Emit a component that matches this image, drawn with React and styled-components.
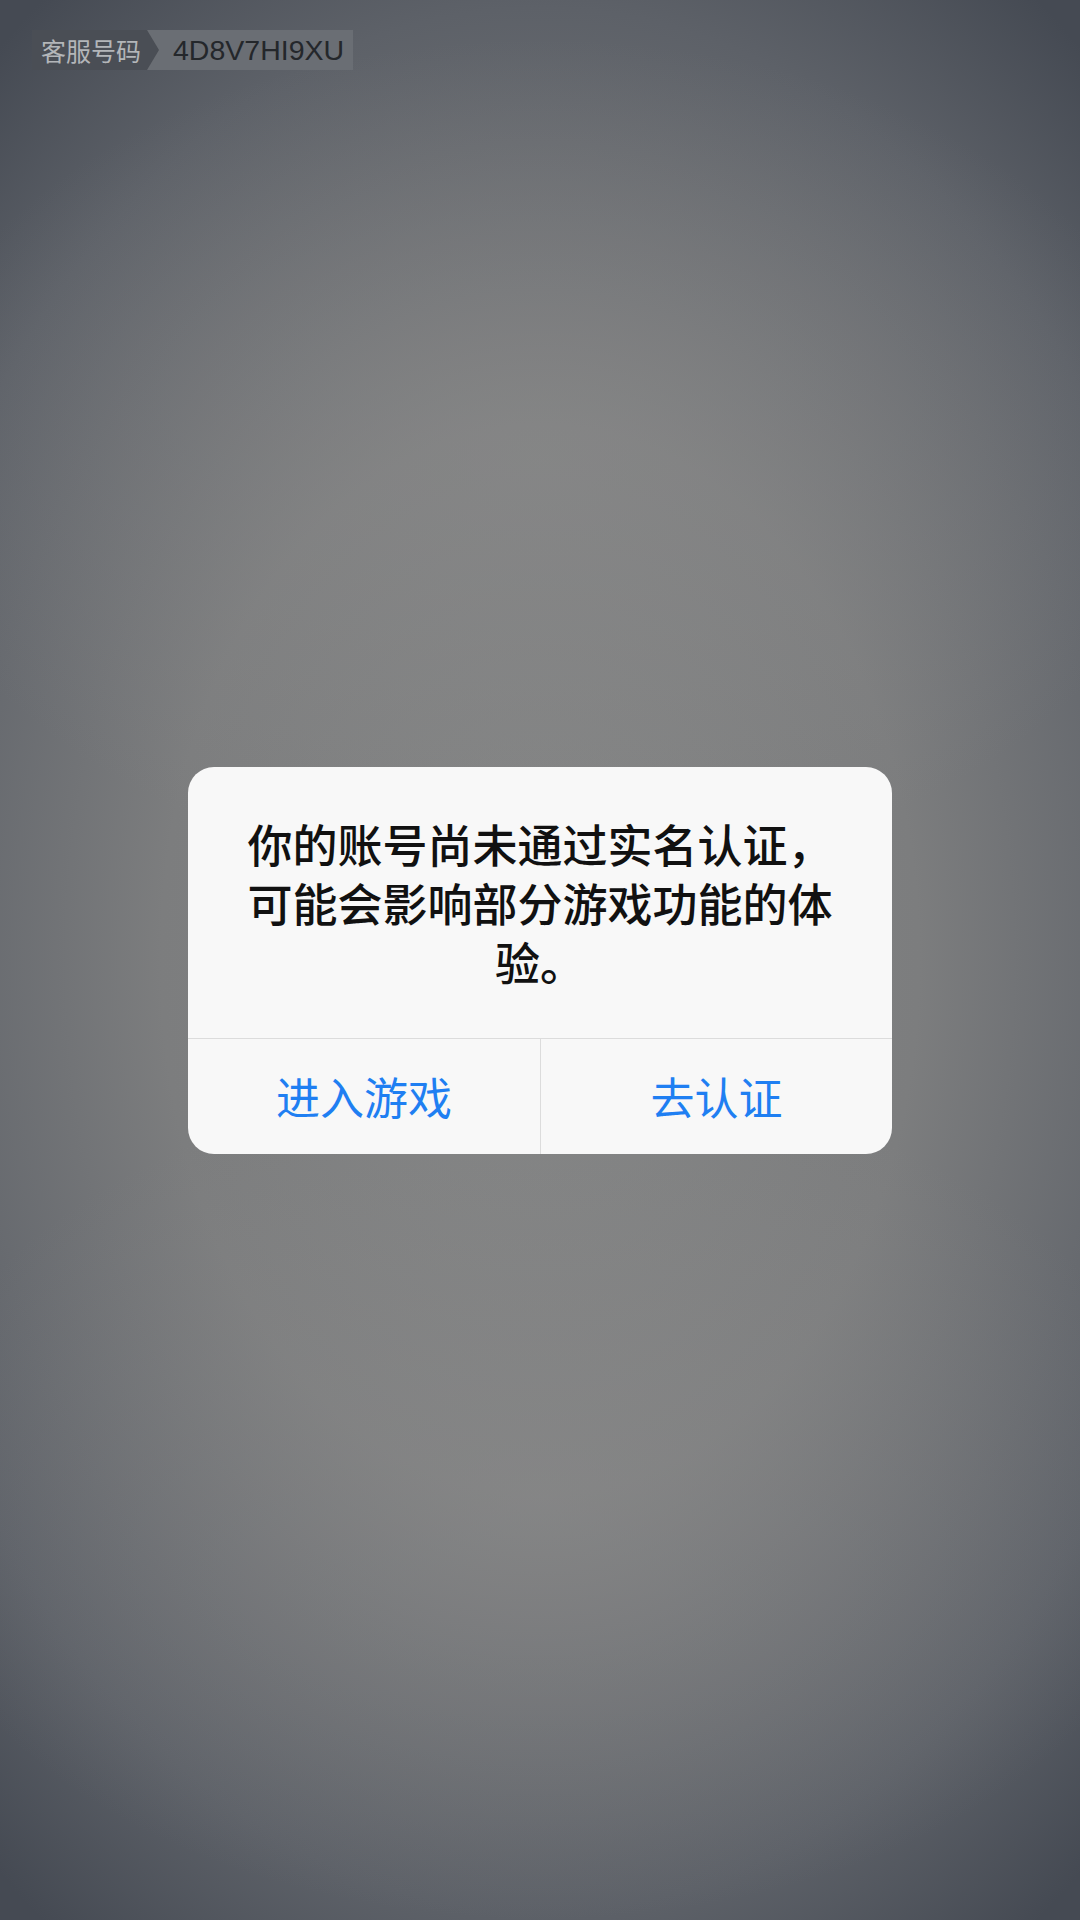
import React from "react";
import styled, { createGlobalStyle } from "styled-components";

const GlobalStyle = createGlobalStyle`
  html, body {
    margin: 0;
    padding: 0;
  }
  body {
    font-family: "Noto Sans CJK SC", "Noto Sans", sans-serif;
  }
`;

const Screen = styled.div`
  position: relative;
  width: 1080px;
  height: 1920px;
  display: flex;
  align-items: center;
  justify-content: center;
  overflow: hidden;
  background:
    radial-gradient(ellipse 60% 22% at 50% 24%, rgba(140, 140, 140, 0.55) 0%, rgba(140, 140, 140, 0) 100%),
    radial-gradient(ellipse 60% 22% at 50% 78%, rgba(140, 140, 140, 0.55) 0%, rgba(140, 140, 140, 0) 100%),
    radial-gradient(ellipse 78% 62% at 50% 50%, #858686 0%, #7c7d7e 45%, #5d6168 80%, #454a53 100%);
`;

const ServiceBadge = styled.div`
  position: absolute;
  top: 30px;
  left: 32px;
  display: flex;
  height: 40px;
`;

const BadgeLabel = styled.div`
  position: relative;
  display: flex;
  align-items: center;
  padding: 0 4px 0 9px;
  width: 102px;
  background: #4a4e55;
  color: #b3b6b9;
  font-size: 25px;
  z-index: 1;

  &::after {
    content: "";
    position: absolute;
    top: 0;
    right: -12px;
    border-top: 20px solid transparent;
    border-bottom: 20px solid transparent;
    border-left: 12px solid #4a4e55;
  }
`;

const BadgeCode = styled.div`
  display: flex;
  align-items: center;
  padding: 0 8px 0 26px;
  width: 172px;
  background: #6a6e74;
  color: #24272b;
  font-family: "Liberation Sans", Arial, sans-serif;
  font-size: 28.5px;
`;

const Dialog = styled.div`
  width: 704px;
  background: #f8f8f8;
  border-radius: 26px;
  overflow: hidden;
`;

const Message = styled.div`
  padding: 47px 59px 47px;
  color: #111111;
  font-size: 45px;
  font-weight: 500;
  line-height: 59px;
  text-align: center;
`;

const Actions = styled.div`
  display: grid;
  grid-template-columns: 1fr 1fr;
  border-top: 1px solid #dcdcdc;
  height: 115px;
`;

const ActionButton = styled.button`
  display: flex;
  align-items: center;
  justify-content: center;
  border: none;
  border-left: ${(p) => (p.$divider ? "1px solid #dcdcdc" : "none")};
  background: transparent;
  color: #1f7ff2;
  font-family: "Noto Sans CJK SC", "Noto Sans", sans-serif;
  font-size: 44px;
  padding: 0;
  cursor: pointer;
`;

export default function App() {
  return (
    <>
      <GlobalStyle />
      <Screen>
        <ServiceBadge>
          <BadgeLabel>客服号码</BadgeLabel>
          <BadgeCode>4D8V7HI9XU</BadgeCode>
        </ServiceBadge>
        <Dialog>
          <Message>你的账号尚未通过实名认证，可能会影响部分游戏功能的体验。</Message>
          <Actions>
            <ActionButton>进入游戏</ActionButton>
            <ActionButton $divider>去认证</ActionButton>
          </Actions>
        </Dialog>
      </Screen>
    </>
  );
}
